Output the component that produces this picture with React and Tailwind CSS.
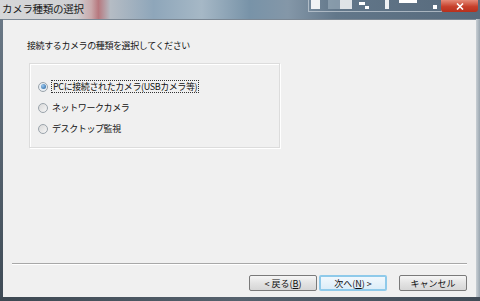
import React, { useState } from 'react';

const jp = 'font-["Meiryo_UI","Noto_Sans_CJK_JP",sans-serif]';

const Radio = ({ checked }) => (
    <span
        className={`w-[10px] h-[10px] rounded-full border border-[#9aa3ab] flex items-center justify-center shrink-0 ${checked ? 'bg-[#e8eef3]' : 'bg-[linear-gradient(135deg,#d8d8d8,#f6f6f6)]'}`}
    >
        {checked && <span className="w-[5px] h-[5px] rounded-full bg-[radial-gradient(circle_at_35%_35%,#9cc8ee,#1f5f9e)]" />}
    </span>
);

const Button = ({ children, primary }) => (
    <button
        className={`w-[68px] h-[16px] flex items-center justify-center text-[9px] leading-none text-[#111] rounded-[2px] ${
            primary
                ? 'border-2 border-[#8fcaea] bg-[linear-gradient(#f1f8fd,#dcedf8)]'
                : 'border border-[#7a7a7a] bg-[linear-gradient(#f6f6f6,#e3e3e3_50%,#d6d6d6)]'
        }`}
    >
        {children}
    </button>
);

export default function App() {
    const [selected, setSelected] = useState(0);
    const options = ['PCに接続されたカメラ(USBカメラ等)', 'ネットワークカメラ', 'デスクトップ監視'];

    return (
        <div className={`w-[480px] h-[301px] flex flex-col overflow-hidden bg-[#5c6a78] ${jp}`}>
            {/* title bar (aero glass) */}
            <div className="relative h-[19px] shrink-0 bg-[linear-gradient(90deg,#d6d7d9_0%,#cfd0d3_16%,#c9a9ab_19%,#b7787e_20.5%,#b5bcc4_23%,#8ea6ba_32%,#a6b8c6_42%,#7893a8_52%,#8497a8_60%,#62778a_70%,#56697b_100%)]">
                <span className="absolute left-[2px] top-[1px] text-[10.5px] leading-[15px] text-[#1a1a1a] tracking-[-0.3px]">
                    カメラ種類の選択
                </span>
                {/* blurred desktop shapes behind glass */}
                <div className="absolute left-[308px] top-0 w-[134px] h-[12px] border border-[#c9d2da]/70 border-t-0 flex">
                    <div className="w-[9px] h-[9px] bg-white/90 ml-[2px]" />
                    <div className="w-[12px] h-[9px] bg-[#9fb0be]/60 ml-[8px]" />
                    <div className="w-[12px] h-[9px] bg-white/80" />
                    <div className="w-[6px] h-[3px] bg-white mt-[2px] ml-[7px]" />
                    <div className="w-[4px] h-[3px] bg-white mt-[6px]" />
                    <div className="w-[4px] h-[9px] bg-white/90 ml-[16px]" />
                    <div className="w-[18px] h-[3px] bg-white ml-[10px]" />
                    <div className="w-[4px] h-[4px] bg-white ml-[16px] mt-[5px]" />
                </div>
                <div className="absolute left-[441px] top-0 w-[37px] h-[12px] rounded-b-[3px] bg-[linear-gradient(#e58a78,#c7402b_55%,#b7301d)] flex items-center justify-center">
                    <svg width="8" height="7" viewBox="0 0 8 7" className="mt-[1px]">
                        <path d="M1 0.5 L7 6.5 M7 0.5 L1 6.5" stroke="#fff" strokeWidth="1.6" />
                    </svg>
                </div>
            </div>

            <div className="flex flex-1 min-h-0">
                <div className="w-[3px] bg-[linear-gradient(#6a7886,#3f4b56)]" />
                <div className="flex-1 flex flex-col bg-[#f0f0f0] border-t border-[#7b8793]">
                    <p className="mt-[20px] ml-[24px] text-[9px] leading-[12px] text-[#151515] tracking-[-0.4px]">
                        接続するカメラの種類を選択してください
                    </p>

                    <div className="ml-[26px] mt-[11px] w-[251px] h-[85px] border border-[#dcdcdc] shadow-[inset_1px_1px_0_#fff,1px_1px_0_#fff] pt-[12px] pl-[8px] flex flex-col">
                        {options.map((label, i) => (
                            <label
                                key={label}
                                onClick={() => setSelected(i)}
                                className="h-[21px] flex items-center gap-[4px] text-[9px] text-[#111] tracking-[-0.4px]"
                            >
                                <Radio checked={selected === i} />
                                <span className={selected === i ? 'outline outline-1 outline-dotted outline-[#333] px-[1px] leading-[11px]' : 'leading-[11px]'}>
                                    {label}
                                </span>
                            </label>
                        ))}
                    </div>

                    <div className="mt-auto mx-[9px] border-t border-[#a8a8a8] shadow-[0_1px_0_#fff]" />
                    <div className="flex justify-end mr-[9px] mt-[11px] mb-[6px]">
                        <Button>
                            &lt; 戻る(<span className="underline">B</span>)
                        </Button>
                        <div className="w-[2px]" />
                        <Button primary>
                            次へ(<span className="underline">N</span>) &gt;
                        </Button>
                        <div className="w-[12px]" />
                        <Button>キャンセル</Button>
                    </div>
                </div>
                <div className="w-[4px] bg-[linear-gradient(90deg,#c9cfd4,#9aa6b0)]" />
            </div>
            <div className="h-[4px] shrink-0 bg-[linear-gradient(90deg,#3d4852,#56626e_50%,#414c57)]" />
        </div>
    );
}
